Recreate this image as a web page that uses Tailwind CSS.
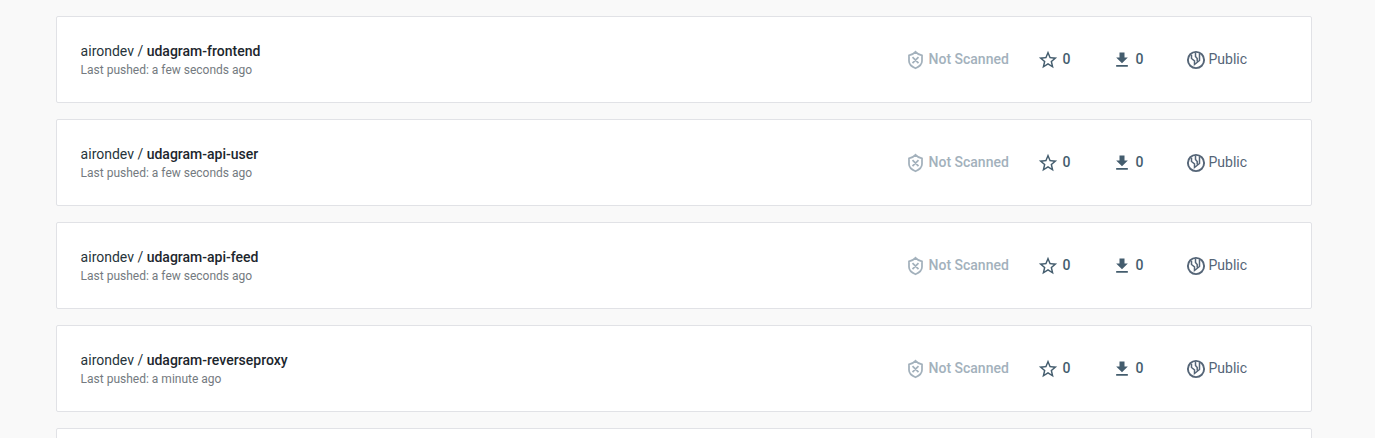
<!DOCTYPE html>
<html lang="en">
<head>
<meta charset="utf-8">
<title>Repositories</title>
<script src="https://cdn.jsdelivr.net/npm/@tailwindcss/browser@4"></script>
</head>
<body class="bg-[#f9f9f9] font-['Roboto',sans-serif] h-[438px] overflow-hidden">
<svg class="hidden">
  <symbol id="shield" viewBox="0 0 18 20"><path d="M9.500 1.900 C8 3.600 6 4.800 3 5.400 V11 C3 14.500 5.500 16.600 9.500 18.200 C13.500 16.600 16 14.500 16 11 V5.400 C13 4.800 11 3.600 9.500 1.900 Z M6.500 7.200 L12.500 13.200 M12.500 7.200 L6.500 13.200" fill="none" stroke="currentColor" stroke-width="1.750"/></symbol>
  <symbol id="star" viewBox="0 0 24 24"><path fill="currentColor" d="M22 9.240l-7.190-.62L12 2 9.190 8.630 2 9.240l5.460 4.730L5.820 21 12 17.270 18.180 21l-1.630-7.030L22 9.240zM12 15.400l-3.760 2.270 1-4.280-3.320-2.880 4.380-.38L12 6.100l1.710 4.040 4.380.38-3.320 2.880 1 4.280L12 15.400z"/></symbol>
  <symbol id="download" viewBox="0 0 24 24"><path fill="currentColor" d="M19 9h-4V3H9v6H5l7 7 7-7zM5 18v2h14v-2H5z"/></symbol>
  <symbol id="globe" viewBox="0 0 20 20"><g fill="none" stroke="currentColor"><circle cx="10" cy="10" r="8.100" stroke-width="1.900"/><path stroke-width="1.500" d="M5.500 4.800 V8.500 L8.500 10.800 V14.500 L13.500 10.500 V3.200 M9.500 2.500 V6.500 L11.200 8.500 V11.600"/></g></symbol>
</svg>
<main id="list" class="flex flex-col gap-4 pt-4 pl-14 w-[1312px] h-[438px] overflow-hidden"></main>
<template id="row">
  <article class="flex items-center h-[87px] shrink-0 bg-white border border-[#e1e2e6] rounded-xs pl-6 pb-0.5 text-sm leading-5">
    <div class="flex-1 pt-[3px] -ml-[0.4px]">
      <h2 class="text-[#27343b] leading-5"><span>airondev / </span><b class="name font-medium text-[#1c262d]"></b></h2>
      <p class="pushed text-xs leading-[18px] text-[#747a80]"></p>
    </div>
    <div class="flex items-center w-[131.500px] text-[#a3b1bc] font-medium"><svg class="w-[18px] h-5 -ml-[0.5px] mr-[4.500px] mt-0.5"><use href="#shield"/></svg><span>Not Scanned</span></div>
    <div class="flex items-center w-[74px] text-[#445d6e] font-medium"><svg class="size-[22px] -ml-px mr-[3.500px] mt-0.5"><use href="#star"/></svg><span>0</span></div>
    <div class="flex items-center w-[74px] text-[#445d6e] font-medium"><svg class="size-5 mr-[3.500px] mt-[3px]"><use href="#download"/></svg><span>0</span></div>
    <div class="flex items-center w-[125px] text-[#556577]"><svg class="size-5 mr-[2.500px] mt-0.5"><use href="#globe"/></svg><span>Public</span></div>
  </article>
</template>
<script>
const repos = [
  ['udagram-frontend', 'a few seconds ago'],
  ['udagram-api-user', 'a few seconds ago'],
  ['udagram-api-feed', 'a few seconds ago'],
  ['udagram-reverseproxy', 'a minute ago'],
];
const list = document.getElementById('list');
for (const [name, when] of repos) {
  const row = document.getElementById('row').content.cloneNode(true);
  row.querySelector('.name').textContent = name;
  row.querySelector('.pushed').textContent = 'Last pushed: ' + when;
  list.append(row);
}
const next = document.createElement('article');
next.className = 'h-[87px] shrink-0 bg-white border border-[#e1e2e6] rounded-xs';
list.append(next);
</script>
</body>
</html>
